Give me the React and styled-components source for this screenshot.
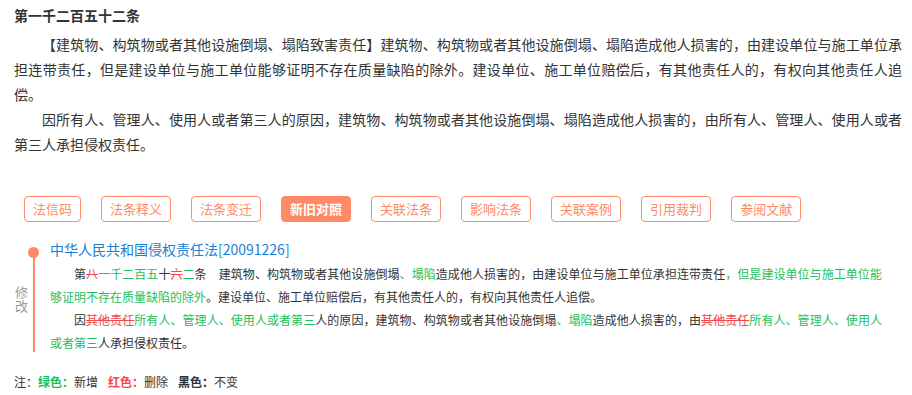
import styled, { createGlobalStyle } from "styled-components";

const GlobalStyle = createGlobalStyle`
  body {
    margin: 0;
    background: #fff;
    font-family: "Noto Sans CJK SC", "Noto Sans", sans-serif;
    color: #333;
  }
`;

const Page = styled.div`
  width: 888px;
  padding: 3px 10px 0 14px;
`;

const Title = styled.h3`
  margin: 0 0 5px;
  font-size: 14px;
  font-weight: 700;
  line-height: 24px;
  color: #333;
`;

const Para = styled.p`
  margin: 0;
  font-size: 14px;
  line-height: 25px;
  text-indent: 2em;
  text-align: justify;
  color: #333;
`;

const Tabs = styled.div`
  display: flex;
  gap: 20px;
  margin: 39px 0 0 10px;
`;

const Tab = styled.span`
  box-sizing: border-box;
  height: 26px;
  padding: 0 8px;
  border: 1px solid #ff8a65;
  border-radius: 4px;
  font-size: 13px;
  line-height: 24px;
  color: ${(p) => (p.$active ? "#fff" : "#ff8a65")};
  background: ${(p) => (p.$active ? "#ff8a65" : "#fff")};
  font-weight: ${(p) => (p.$active ? 700 : 400)};
  white-space: nowrap;
`;

const Item = styled.div`
  display: flex;
  margin-top: 15px;
`;

const Gutter = styled.div`
  position: relative;
  flex: 0 0 36px;
  display: flex;
  align-items: center;
`;

const Rail = styled.div`
  position: absolute;
  left: 19px;
  top: 15px;
  bottom: 2px;
  width: 2px;
  background: #ff8a65;
`;

const Dot = styled.div`
  position: absolute;
  left: 14px;
  top: 10px;
  width: 11px;
  height: 11px;
  border-radius: 50%;
  background: #ff8a65;
`;

const Label = styled.div`
  width: 13px;
  margin-left: 1px;
  padding-top: 6px;
  font-size: 13px;
  line-height: 14px;
  color: #999;
`;

const Content = styled.div`
  width: 832px;
`;

const LawName = styled.div`
  font-size: 14px;
  line-height: 24px;
  color: #1b7ed1;
  margin-bottom: 1px;
`;

const ModPara = styled.p`
  margin: 0;
  font-size: 12px;
  line-height: 23px;
  text-indent: 2em;
  text-align: justify;
  color: #333;
`;

const Add = styled.span`
  color: #1dbf5a;
`;

const Del = styled.span`
  color: #f04a4a;
  text-decoration: line-through;
`;

const Legend = styled.div`
  margin-top: 18px;
  font-size: 12px;
  line-height: 20px;
  color: #333;
`;

const Key = styled.span`
  color: ${(p) => p.$color};
  font-weight: 700;
  margin-left: ${(p) => (p.$gap ? "10px" : "0")};
`;

const tabs = ["法信码", "法条释义", "法条变迁", "新旧对照", "关联法条", "影响法条", "关联案例", "引用裁判", "参阅文献"];

export default function App() {
  return (
    <Page>
      <GlobalStyle />
      <Title>第一千二百五十二条</Title>
      <Para>
        【建筑物、构筑物或者其他设施倒塌、塌陷致害责任】建筑物、构筑物或者其他设施倒塌、塌陷造成他人损害的，由建设单位与施工单位承担连带责任，但是建设单位与施工单位能够证明不存在质量缺陷的除外。建设单位、施工单位赔偿后，有其他责任人的，有权向其他责任人追偿。
      </Para>
      <Para>
        因所有人、管理人、使用人或者第三人的原因，建筑物、构筑物或者其他设施倒塌、塌陷造成他人损害的，由所有人、管理人、使用人或者第三人承担侵权责任。
      </Para>
      <Tabs>
        {tabs.map((t) => (
          <Tab key={t} $active={t === "新旧对照"}>
            {t}
          </Tab>
        ))}
      </Tabs>
      <Item>
        <Gutter>
          <Rail />
          <Dot />
          <Label>修改</Label>
        </Gutter>
        <Content>
          <LawName>中华人民共和国侵权责任法[20091226]</LawName>
          <ModPara>
            第<Del>八</Del>
            <Add>一千二百五</Add>十<Del>六</Del>
            <Add>二</Add>条　建筑物、构筑物或者其他设施倒塌<Add>、塌陷</Add>
            造成他人损害的，由建设单位与施工单位承担连带责任
            <Add>，但是建设单位与施工单位能够证明不存在质量缺陷的除外</Add>
            。建设单位、施工单位赔偿后，有其他责任人的，有权向其他责任人追偿。
          </ModPara>
          <ModPara>
            因<Del>其他责任</Del>
            <Add>所有人、管理人、使用人或者第三</Add>人的原因，建筑物、构筑物或者其他设施倒塌
            <Add>、塌陷</Add>造成他人损害的，由<Del>其他责任</Del>
            <Add>所有人、管理人、使用人或者第三</Add>人承担侵权责任。
          </ModPara>
        </Content>
      </Item>
      <Legend>
        注：<Key $color="#1dbf5a">绿色：</Key>新增
        <Key $color="#f04a4a" $gap>
          红色：
        </Key>
        删除
        <Key $color="#333" $gap>
          黑色：
        </Key>
        不变
      </Legend>
    </Page>
  );
}
